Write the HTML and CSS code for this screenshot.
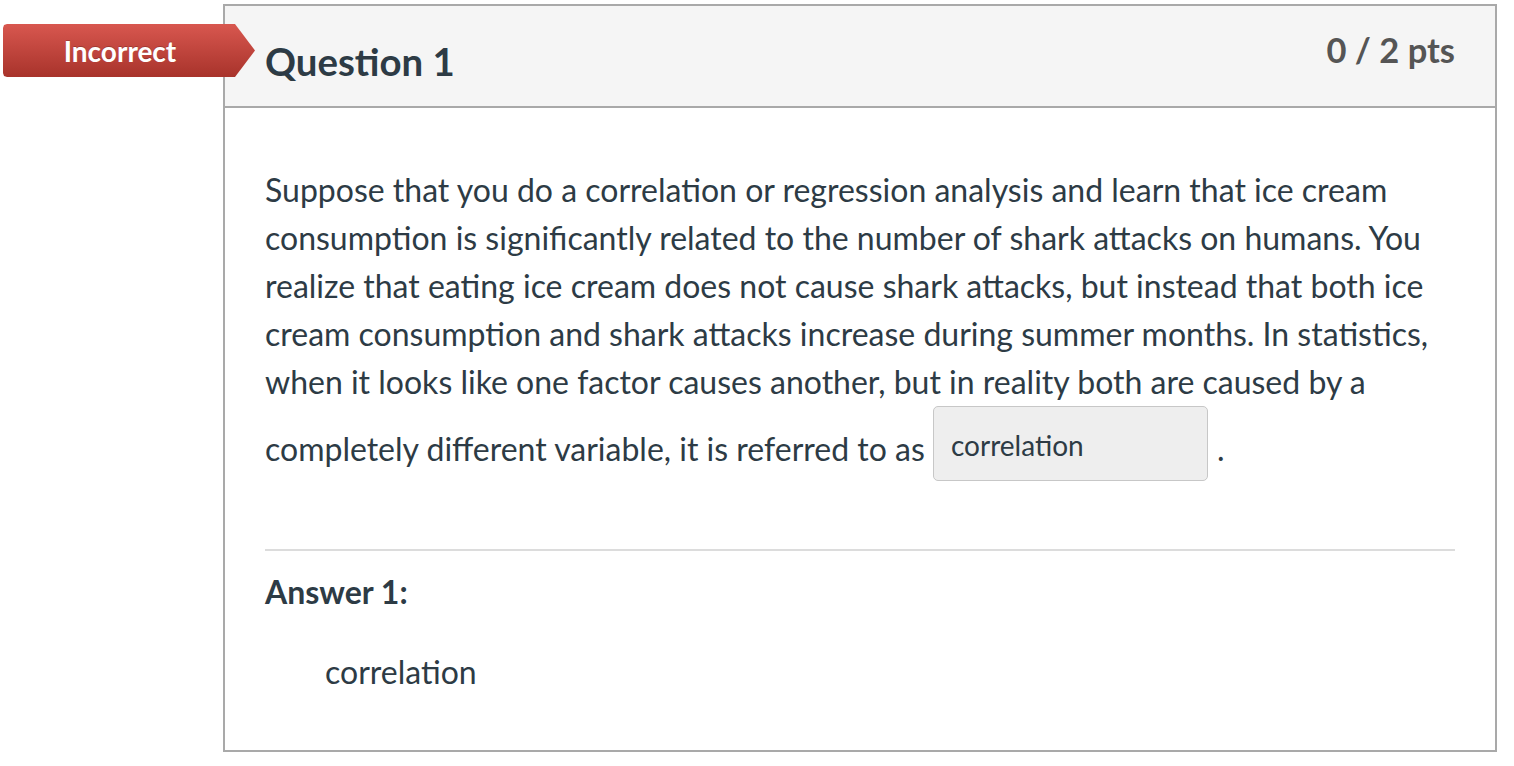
FILE: index.html
```html
<!DOCTYPE html>
<html>
<head>
<meta charset="utf-8">
<link rel="stylesheet" href="styles.css">
</head>
<body>
<div class="page">
  <div class="badge">Incorrect</div>
  <div class="question">
    <div class="q-header">
      <h2 class="q-title">Question 1</h2>
      <span class="q-pts">0 / 2 pts</span>
    </div>
    <div class="q-body">
      <p class="q-text">Suppose that you do a correlation or regression analysis and learn that ice cream consumption is significantly related to the number of shark attacks on humans. You realize that eating ice cream does not cause shark attacks, but instead that both ice cream consumption and shark attacks increase during summer months. In statistics, when it looks like one factor causes another, but in reality both are caused by a completely different variable, it is referred to as <span class="blank">correlation</span>.</p>
      <div class="divider"></div>
      <div class="answer-label">Answer 1:</div>
      <div class="answer">correlation</div>
    </div>
  </div>
</div>
</body>
</html>
```
FILE: styles.css
```css
html, body {
  margin: 0;
  padding: 0;
  background: #ffffff;
}
body {
  font-family: Lato, "Open Sans", sans-serif;
  color: #2d3b45;
}
.page {
  position: relative;
  padding: 4px 17px 0 223px;
}
.badge {
  position: absolute;
  left: 3px;
  top: 24px;
  width: 252px;
  height: 53px;
  box-sizing: border-box;
  padding-right: 18px;
  display: flex;
  align-items: center;
  justify-content: center;
  color: #fff;
  font-weight: 700;
  font-size: 28px;
  line-height: 1;
  background: linear-gradient(#d8574f, #a8332b);
  clip-path: polygon(0 4px, 1px 1px, 4px 0, 232px 0, 252px 26.5px, 232px 53px, 4px 53px, 1px 52px, 0 49px);
  text-shadow: 0 -1px 0 rgba(0,0,0,0.2);
}
.question {
  border: 2px solid #a9a9a9;
  width: 1270px;
}
.q-header {
  height: 100px;
  background: #f5f5f5;
  border-bottom: 2px solid #a9a9a9;
  display: flex;
  justify-content: space-between;
  align-items: flex-start;
  padding: 0 40px;
}
.q-title {
  margin: 32px 0 0 0;
  font-size: 38.4px;
  line-height: 1.2;
  font-weight: 700;
  color: #2d3b45;
}
.q-pts {
  margin-top: 23px;
  font-size: 34.5px;
  line-height: 1.2;
  font-weight: 700;
  color: #555555;
}
.q-body {
  padding: 58px 40px 54px 40px;
}
.q-text {
  margin: 0;
  font-size: 32px;
  line-height: 48px;
}
.blank {
  display: inline-block;
  width: 275px;
  height: 75px;
  box-sizing: border-box;
  border: 1px solid #c7c7c7;
  border-radius: 5px;
  background: #eeeeee;
  font-size: 28px;
  line-height: 42px;
  padding: 17px 0 0 17px;
  margin: 0 9px 0 0;
  vertical-align: 5px;
}
.divider {
  margin-top: 68px;
  height: 2px;
  background: #dcdcdc;
}
.answer-label {
  margin-top: 17px;
  font-size: 32px;
  line-height: 48px;
  font-weight: 700;
}
.answer {
  margin-top: 32px;
  padding-left: 60px;
  font-size: 32px;
  line-height: 48px;
}
```
